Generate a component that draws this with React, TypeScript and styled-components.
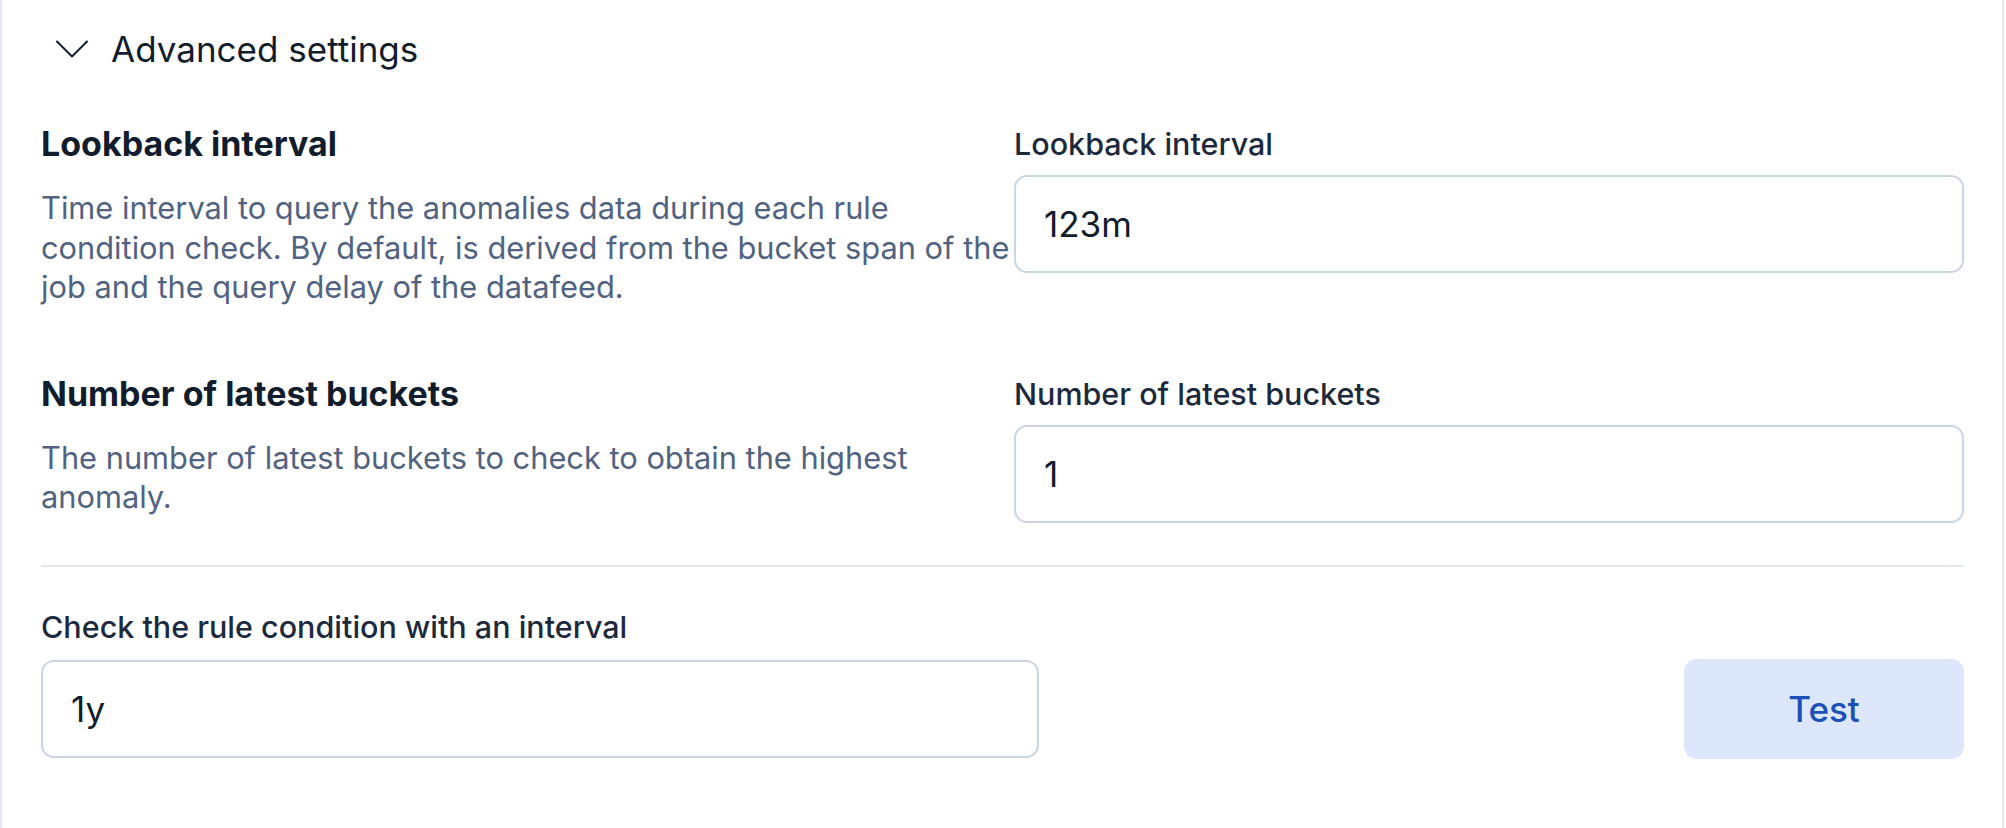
import styled, { createGlobalStyle } from "styled-components";

const GlobalStyle = createGlobalStyle`
  body {
    margin: 0;
    background: #ffffff;
    font-family: Inter, "Noto Sans", "Liberation Sans", sans-serif;
    color: #111c2c;
  }
  * {
    box-sizing: border-box;
  }
`;

const Panel = styled.div`
  width: 2004px;
  min-height: 828px;
  border-left: 2px solid #e3e8f2;
  border-right: 2px solid #e3e8f2;
  padding: 25px 38px 0 39px;
  display: flex;
  flex-direction: column;
`;

const AccordionHeader = styled.button`
  display: flex;
  align-items: center;
  gap: 23px;
  height: 48px;
  padding: 0 0 0 15px;
  border: none;
  background: none;
  font-family: inherit;
  font-size: 35px;
  font-weight: 400;
  color: #111c2c;
  cursor: pointer;
  align-self: flex-start;
`;

const Chevron = () => (
  <svg width="32" height="18" viewBox="0 0 32 18" fill="none">
    <polyline
      points="1,1.5 16,16.5 31,1.5"
      stroke="#111c2c"
      strokeWidth="2"
      strokeLinecap="round"
      strokeLinejoin="round"
    />
  </svg>
);

const FormRow = styled.div<{ $top: number }>`
  display: grid;
  grid-template-columns: 1fr 950px;
  column-gap: 0;
  margin-top: ${(props) => props.$top}px;
`;

const Described = styled.div`
  display: flex;
  flex-direction: column;
  gap: 24px;
`;

const Heading = styled.h3`
  margin: 0;
  font-size: 34px;
  line-height: 40px;
  font-weight: 700;
  color: #111c2c;
`;

const Description = styled.p`
  margin: 0;
  font-size: 30.8px;
  line-height: 39.6px;
  color: #516381;
`;

const Field = styled.div`
  display: flex;
  flex-direction: column;
  gap: 11px;
`;

const Label = styled.label`
  font-size: 30.5px;
  line-height: 40px;
  font-weight: 500;
  color: #1d2a3e;
`;

const TextInput = styled.input<{ $width?: number }>`
  width: ${(props) => (props.$width ? `${props.$width}px` : "100%")};
  height: 98px;
  padding: 0 28px;
  border: 2px solid #cbd4e3;
  border-radius: 13px;
  background: #ffffff;
  font-family: inherit;
  font-size: 35px;
  color: #111c2c;
  outline: none;
`;

const Divider = styled.hr`
  margin: 42px 0 0;
  height: 2px;
  border: none;
  background: #e3e8f2;
`;

const CheckSection = styled.div`
  margin-top: 40px;
  display: flex;
  flex-direction: column;
  gap: 12px;
`;

const CheckRow = styled.div`
  display: flex;
  align-items: center;
  justify-content: space-between;
`;

const TestButton = styled.button`
  width: 280px;
  height: 100px;
  border: none;
  border-radius: 13px;
  background: #dce7fc;
  color: #1d4fb8;
  font-family: inherit;
  font-size: 35px;
  font-weight: 500;
  cursor: pointer;
`;

export default function App() {
  return (
    <>
      <GlobalStyle />
      <Panel>
        <AccordionHeader>
          <Chevron />
          Advanced settings
        </AccordionHeader>

        <FormRow $top={51}>
          <Described>
            <Heading>Lookback interval</Heading>
            <Description>
              Time interval to query the anomalies data during each rule
              condition check. By default, is derived from the bucket span of
              the job and the query delay of the datafeed.
            </Description>
          </Described>
          <Field>
            <Label>Lookback interval</Label>
            <TextInput defaultValue="123m" />
          </Field>
        </FormRow>

        <FormRow $top={67}>
          <Described>
            <Heading>Number of latest buckets</Heading>
            <Description>
              The number of latest buckets to check to obtain the highest
              anomaly.
            </Description>
          </Described>
          <Field>
            <Label>Number of latest buckets</Label>
            <TextInput defaultValue="1" />
          </Field>
        </FormRow>

        <Divider />

        <CheckSection>
          <Label>Check the rule condition with an interval</Label>
          <CheckRow>
            <TextInput $width={998} defaultValue="1y" />
            <TestButton>Test</TestButton>
          </CheckRow>
        </CheckSection>
      </Panel>
    </>
  );
}
